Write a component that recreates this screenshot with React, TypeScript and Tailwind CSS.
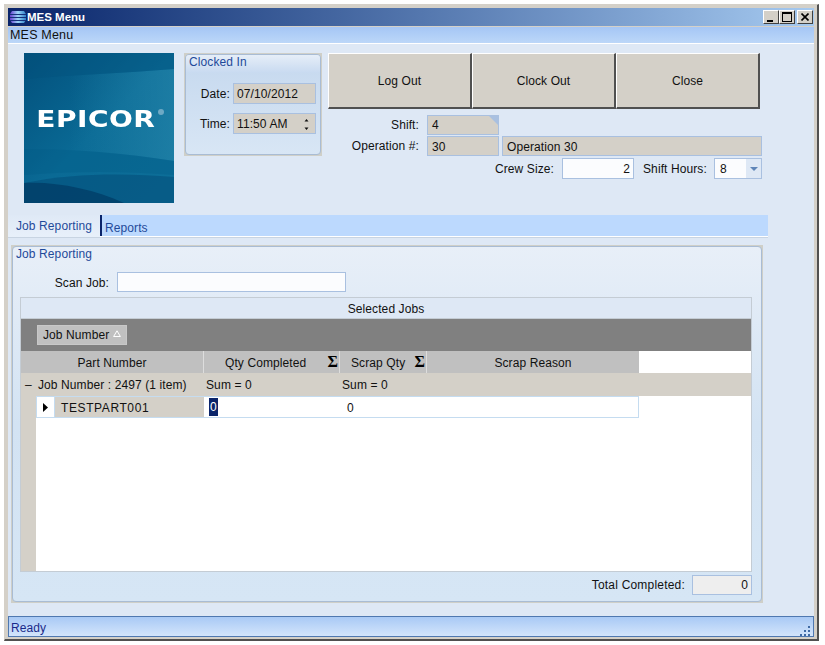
const font = "font-['Liberation_Sans',sans-serif] text-[12px] tracking-[0.1px] text-[#111]";

const Field = ({ value, className }: { value: string; className: string }) => (
  <div className={`flex items-center border border-[#a9c0e0] bg-[#d4d0c8] pt-[1px] ${className}`}>
    {value}
  </div>
);

const WinButton = ({ label }: { label: string }) => (
  <button className="flex h-[56px] w-[144px] items-center justify-center border-t border-l border-b-2 border-r-2 border-t-white border-l-white border-b-[#505050] border-r-[#505050] bg-[#d4d0c8]">
    {label}
  </button>
);

const CaptionButton = ({ children }: { children: React.ReactNode }) => (
  <div className="flex h-[14px] w-[16px] items-center justify-center border border-t-white border-l-white border-b-[#404040] border-r-[#404040] bg-[#d4d0c8]">
    {children}
  </div>
);

const Sigma = () => (
  <span className="font-['Liberation_Serif',serif] text-[16px] leading-none font-bold text-black">Σ</span>
);

const Logo = () => (
  <div className="relative flex h-[150px] w-[150px] shrink-0 items-center justify-center overflow-hidden bg-gradient-to-br from-[#03507c] via-[#0a6a95] to-[#0d6f99]">
    <svg className="absolute inset-0" width="150" height="150" viewBox="0 0 150 150">
      <defs>
        <linearGradient id="sheen" x1="0" y1="0" x2="1" y2="0">
          <stop offset="0.3" stopColor="#2a8aae" stopOpacity="0" />
          <stop offset="1" stopColor="#2a8aae" stopOpacity="0.55" />
        </linearGradient>
      </defs>
      <path d="M0 26C50 22 100 20 150 16V108C100 100 50 96 0 96Z" fill="url(#sheen)" />
      <path d="M0 0H150V16C100 20 50 22 0 26Z" fill="#02507b" opacity="0.35" />
      <path d="M0 96C50 96 100 100 150 108V122C100 118 50 118 0 122Z" fill="#005a85" opacity="0.3" />
      <path d="M0 130C50 120 100 120 150 124V150H0Z" fill="#024a76" opacity="0.5" />
      <path d="M0 130C30 128 70 136 100 150H0Z" fill="#013c66" opacity="0.75" />
    </svg>
    <span className="relative -mt-[17px] -ml-[7px] scale-x-[1.22] font-['DejaVu_Sans',sans-serif] text-[23px] leading-none font-bold tracking-[0.4px] text-white blur-[0.4px]">
      EPICOR
    </span>
    <span className="absolute top-[56px] right-[10px] h-[6px] w-[6px] rounded-full bg-[#6ea9c4]" />
  </div>
);

export default function App() {
  return (
    <div className={`h-[645px] w-[825px] bg-white p-[4px] pr-[6px] ${font}`}>
      <div className="flex h-[637px] w-[815px] flex-col border-t border-r-2 border-b-2 border-l border-t-[#d4d0c8] border-r-[#505050] border-b-[#505050] border-l-[#d4d0c8] bg-[#d4d0c8] px-[3px] pt-[3px] pb-[2px]">
        <div className="flex h-[18px] shrink-0 items-center bg-gradient-to-r from-[#0a246a] to-[#a6caf0] pr-[1px] pl-[2px]">
          <svg width="16" height="14" viewBox="0 0 16 14" className="mr-[1px] shrink-0">
            <defs>
              <linearGradient id="globe" x1="0" y1="0" x2="1" y2="0">
                <stop offset="0" stopColor="#6a3fd0" />
                <stop offset="0.5" stopColor="#9bd6f7" />
                <stop offset="1" stopColor="#2f7fc8" />
              </linearGradient>
            </defs>
            <path d="M2 1H14L16 4V10L14 13H2L0 10V4Z" fill="url(#globe)" />
            <path d="M0 4.5H16M0 7.5H16M0 10.5H16" stroke="#16307a" strokeWidth="1" />
          </svg>
          <span className="pt-[1px] text-[11.5px] font-bold tracking-[0px] text-white">MES Menu</span>
          <div className="ml-auto flex items-center">
            <CaptionButton>
              <span className="mt-[7px] mr-[3px] h-[2px] w-[6px] bg-black" />
            </CaptionButton>
            <CaptionButton>
              <span className="h-[10px] w-[10px] border border-t-2 border-black" />
            </CaptionButton>
            <div className="ml-[2px]">
              <CaptionButton>
                <svg width="8" height="8" viewBox="0 0 8 8">
                  <path d="M0.5 0.5L7.5 7.5M7.5 0.5L0.5 7.5" stroke="#000" strokeWidth="1.6" />
                </svg>
              </CaptionButton>
            </div>
          </div>
        </div>

        <div className="mt-[1px] flex h-[17px] shrink-0 items-center border-b border-white bg-gradient-to-b from-[#a5c6f5] to-[#bcd7f8] pt-[1px] pl-[2px] text-[12.5px] tracking-[0.2px]">
          MES Menu
        </div>

        <div className="flex min-h-0 flex-1 flex-col bg-[#dee8f5]">
          <div className="flex pt-[9px] pl-[16px]">
            <Logo />
            <div className="ml-[10px] h-[103px] w-[138px] shrink-0 bg-[#cfcfc8] p-[1px]">
              <div className="flex h-full flex-col rounded-[4px] border border-[#a9bcd4] bg-gradient-to-b from-[#c5d8ee] to-[#d8e6f5]">
                <div className="h-[18px] rounded-t-[3px] bg-gradient-to-b from-[#e6eef8] to-[#c8daf0] pl-[3px] leading-[15px] text-[#1f4a9a]">
                  Clocked In
                </div>
                <div className="mt-[10px] flex items-center justify-end pr-[4px]">
                  <span className="mr-[3px]">Date:</span>
                  <Field value="07/10/2012" className="h-[21px] w-[83px] pl-[3px]" />
                </div>
                <div className="mt-[9px] flex items-center justify-end pr-[4px]">
                  <span className="mr-[3px]">Time:</span>
                  <div className="flex h-[21px] w-[83px] items-center justify-between border border-[#a9c0e0] bg-[#d4d0c8] pt-[1px] pr-[6px] pl-[3px]">
                    11:50 AM
                    <svg width="5" height="13" viewBox="0 0 5 13">
                      <path d="M2.5 1L4.5 3.5H.5ZM2.5 12L.5 9.5H4.5Z" fill="#111" />
                    </svg>
                  </div>
                </div>
              </div>
            </div>

            <div className="ml-[6px] flex flex-col">
              <div className="flex">
                <WinButton label="Log Out" />
                <WinButton label="Clock Out" />
                <WinButton label="Close" />
              </div>
              <div className="mt-[5px] flex h-[21px] items-center">
                <span className="w-[91px] text-right">Shift:</span>
                <div className="relative ml-[8px] flex h-[20px] w-[72px] items-center border border-[#a9c0e0] bg-[#d4d0c8] pt-[1px] pl-[4px]">
                  4
                  <svg className="absolute top-0 right-0" width="9" height="9" viewBox="0 0 9 9">
                    <path d="M0 0H9V9Z" fill="#a9c0e0" />
                  </svg>
                </div>
              </div>
              <div className="flex h-[22px] items-center">
                <span className="w-[91px] text-right">Operation #:</span>
                <Field value="30" className="ml-[8px] h-[20px] w-[72px] pl-[4px]" />
                <Field value="Operation 30" className="ml-[3px] h-[20px] w-[260px] pl-[4px]" />
              </div>
              <div className="flex h-[22px] items-center pt-[1px]">
                <span className="w-[226px] text-right">Crew Size:</span>
                <div className="ml-[8px] flex h-[21px] w-[72px] items-center justify-end border border-[#a9c0e0] bg-[#fbfcfe] pt-[1px] pr-[3px]">
                  2
                </div>
                <span className="ml-[9px] w-[63px] whitespace-nowrap">Shift Hours:</span>
                <div className="ml-[8px] flex h-[21px] w-[48px] items-center justify-between border border-[#a9c0e0] bg-[#fbfcfe] pl-[5px]">
                  8
                  <span className="flex h-full w-[15px] items-center justify-center bg-[#dee8f5]">
                    <svg width="8" height="4" viewBox="0 0 8 4">
                      <path d="M0 0H8L4 4Z" fill="#5f85b8" />
                    </svg>
                  </span>
                </div>
              </div>
            </div>
          </div>

          <div className="mt-[12px] flex h-[23px] w-[760px] items-stretch border-b border-[#c8d4e2]">
            <div className="flex w-[92px] items-center bg-gradient-to-b from-[#dfe9f6] to-[#e8f0fa] pb-[1px] pl-[8px] text-[#1f4a9a]">
              Job Reporting
            </div>
            <div className="flex flex-1 items-center border-b border-white bg-[#bcd9fe]">
              <div className="flex h-full items-center border-l-2 border-[#0a246a] pt-[4px] pl-[3px] text-[#1f4a9a]">Reports</div>
            </div>
          </div>

          <div className="mt-[7px] ml-[3px] h-[358px] w-[752px] bg-[#cfcfc8] p-[1px]">
            <div className="flex h-full flex-col rounded-[4px] border border-[#a9bcd4] bg-gradient-to-b from-[#e8eff8] via-[#d3e3f3] to-[#d6e6f5] pr-[9px] pl-[7px]">
              <div className="-ml-[4px] h-[16px] shrink-0 leading-[15px] text-[#1f4a9a]">Job Reporting</div>
              <div className="mt-[9px] flex h-[20px] shrink-0 items-center">
                <span className="w-[89px] pt-[1px] text-right">Scan Job:</span>
                <div className="ml-[8px] h-[20px] w-[229px] border border-[#a9c0e0] bg-[#fbfcfe]" />
              </div>
              <div className="mt-[5px] flex h-[275px] shrink-0 flex-col border border-[#c4ccd4] bg-white">
                <div className="flex h-[21px] shrink-0 items-center justify-center border-b border-[#c4ccd4] bg-[#dee8f5] pt-[1px]">
                  Selected Jobs
                </div>
                <div className="flex h-[32px] shrink-0 items-center bg-[#808080] pl-[16px]">
                  <div className="flex h-[20px] w-[90px] items-center border border-[#c8c8c8] bg-[#c0c0c0] pl-[5px]">
                    Job Number
                    <svg width="8" height="7" viewBox="0 0 8 7" className="mb-[4px] ml-[4px]">
                      <path d="M4 .8L7.4 6.5H.6Z" fill="#c0c0c0" stroke="#fff" strokeWidth="1" />
                    </svg>
                  </div>
                </div>
                <div className="flex h-[22px] shrink-0">
                  <div className="flex w-[183px] items-center justify-center border-r border-[#dddddd] bg-[#c0c0c0] pt-[1px]">Part Number</div>
                  <div className="relative flex w-[136px] items-center border-r border-[#dddddd] bg-[#c0c0c0] pt-[1px] pl-[21px]">
                    Qty Completed
                    <span className="absolute right-[1px]"><Sigma /></span>
                  </div>
                  <div className="relative flex w-[87px] items-center border-r border-[#dddddd] bg-[#c0c0c0] pt-[1px] pl-[11px]">
                    Scrap Qty
                    <span className="absolute right-[1px]"><Sigma /></span>
                  </div>
                  <div className="flex w-[212px] items-center justify-center bg-[#c0c0c0] pt-[1px]">Scrap Reason</div>
                </div>
                <div className="flex h-[23px] shrink-0 items-center bg-[#d4d0c8]">
                  <div className="flex w-[183px]">
                    <span className="w-[17px] pl-[4px]">–</span>
                    Job Number : 2497 (1 item)
                  </div>
                  <div className="w-[136px] pl-[2px]">Sum = 0</div>
                  <div className="pl-[2px]">Sum = 0</div>
                </div>
                <div className="flex min-h-0 flex-1">
                  <div className="w-[15px] shrink-0 bg-[#d4d0c8]" />
                  <div className="flex h-[22px] w-[603px] border border-[#c5dcf0]">
                    <div className="flex w-[18px] shrink-0 items-center justify-center border-r border-[#c5dcf0]">
                      <svg width="5" height="9" viewBox="0 0 5 9">
                        <path d="M0 0L5 4.5L0 9Z" fill="#000" />
                      </svg>
                    </div>
                    <div className="flex w-[149px] shrink-0 items-center bg-[#d4d0c8] pt-[1px] pl-[6px] tracking-[0.6px]">TESTPART001</div>
                    <div className="flex w-[137px] shrink-0 items-center pl-[5px]">
                      <span className="bg-[#0a246a] px-[1px] text-white">0</span>
                    </div>
                    <div className="flex items-center pt-[1px] pl-[6px]">0</div>
                  </div>
                </div>
              </div>
              <div className="mt-[3px] flex h-[20px] shrink-0 items-center justify-end">
                <span className="tracking-[0.2px]">Total Completed:</span>
                <div className="ml-[7px] flex h-[20px] w-[60px] items-center justify-end border border-[#a9c0e0] bg-[#eeeeee] pr-[3px]">0</div>
              </div>
            </div>
          </div>

          <div className="mt-auto flex h-[21px] shrink-0 items-center justify-between border border-[#4f78b0] bg-gradient-to-b from-[#a9c9f5] to-[#d3e5fb] px-[2px] pt-[3px] text-[#1a2a8a]">
            Ready
            <svg width="12" height="12" viewBox="0 0 12 12" className="mt-[3px]">
              <path d="M9 2h2v2H9zM5 6h2v2H5zM9 6h2v2H9zM1 10h2v2H1zM5 10h2v2H5zM9 10h2v2H9z" fill="#3f6aa5" />
            </svg>
          </div>
        </div>
      </div>
    </div>
  );
}
